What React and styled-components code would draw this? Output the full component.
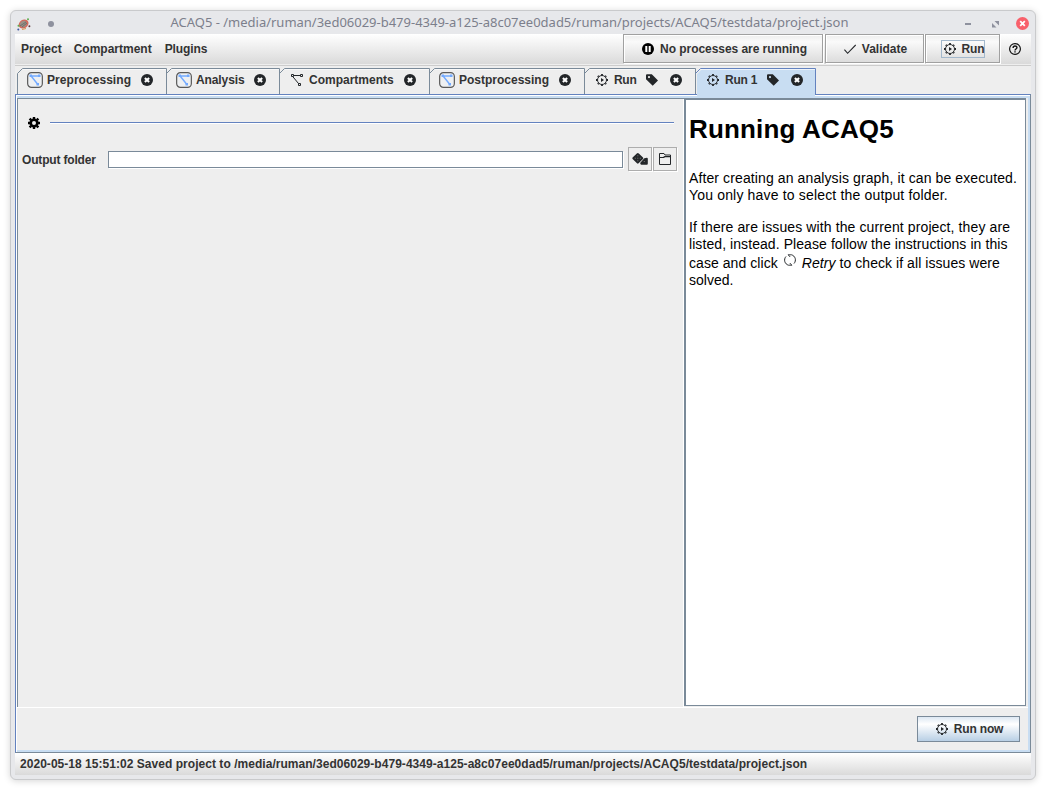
import React from "react";
import styled, { createGlobalStyle, css } from "styled-components";

const Global = createGlobalStyle`
  * { box-sizing: border-box; }
  html, body { margin: 0; padding: 0; background: #fff; }
  body { width: 1046px; height: 790px; overflow: hidden; font: bold 12px/14px "Liberation Sans", Arial, sans-serif; color: #333; }
  svg { display: block; flex: none; }
`;

const Desktop = styled.div`
  width: 1046px;
  height: 790px;
  padding: 10px;
`;
const Frame = styled.div`
  width: 1026px;
  height: 770px;
  padding: 0 4px;
  display: flex;
  flex-direction: column;
  background: #e7e8eb;
  border: 1px solid #c9cacc;
  border-radius: 6px;
  box-shadow: 0 1px 7px rgba(0, 0, 0, 0.17);
`;
const TitleBar = styled.header`
  display: flex;
  align-items: center;
  height: 23px;
  flex: none;
  padding: 2px 2px 0 2px;
`;
const Dot = styled.i`
  width: 6px;
  height: 6px;
  margin: 0 0 0 16.5px;
  border-radius: 50%;
  background: #8e919e;
`;
const Title = styled.div`
  margin: 0 0 3px 117px;
  font: 400 13px/18px "Noto Sans", sans-serif;
  letter-spacing: -0.01px;
  color: #7c7f8c;
  white-space: nowrap;
`;
const WindowControls = styled.div`
  display: flex;
  align-items: center;
  gap: 17px;
  margin-left: auto;

  & > :first-child { margin-right: 4px; }
`;
const MenuBar = styled.nav`
  display: flex;
  height: 32px;
  flex: none;
  border-bottom: 1px solid #ccc;
  background: linear-gradient(#fff 0, #dadada 30px, #eee 30px);
`;
const Menu = styled.span`
  padding: 8px 0 0 6px;
  margin-right: 6px;
  letter-spacing: ${(p) => p.$ls || 0}px;
  white-space: nowrap;

  &:nth-child(3) { margin-left: 1px; }
`;
const Tools = styled.div`
  display: flex;
  gap: 1px;
  margin-left: auto;
  height: 30px;
`;
const ToolButton = styled.button`
  display: flex;
  align-items: center;
  justify-content: center;
  gap: 6px;
  width: ${(p) => p.$w}px;
  height: 29px;
  margin-right: ${(p) => p.$mr || 0}px;
  padding: 0 0 0 ${(p) => p.$pl || 0}px;
  border: 1px solid #a0a0a0;
  box-shadow: 1px 1px 0 #fff, inset 1px 1px 0 #fff;
  background: linear-gradient(#ededed, #fafafa 25%, #dcdcdc);
  font: inherit;
  color: inherit;
  letter-spacing: ${(p) => p.$ls || 0}px;
  white-space: nowrap;
`;
const Focus = styled.span`
  display: flex;
  align-items: center;
  gap: 6px;
  height: 18px;
  padding: 0 0 0 2px;
  border: 1px solid #a3b8cc;
`;
const Help = styled.div`
  width: 30px;
  padding: 9px 0 0 8px;
`;
const Tabs = styled.div`
  display: flex;
  height: 29px;
  flex: none;
  padding: 2px 0 0 2px;
  background: #eee;
`;
const TabBox = styled.div`
  position: relative;
  isolation: isolate;
  display: flex;
  align-items: center;
  width: ${(p) => p.$w}px;
  height: 26px;
  padding: 0 0 2px 10px;
  margin-bottom: 1px;
  ${(p) => p.$active && css`
    height: 28px;
    padding-bottom: 4px;
    z-index: 1;
  `}
`;
const TabShape = styled.svg`
  position: absolute;
  left: 0;
  top: 0;
  z-index: -1;
  overflow: visible;
`;
const TabLabel = styled.span`
  margin-left: 4px;
  width: ${(p) => p.$w}px;
  letter-spacing: ${(p) => p.$ls || 0}px;
  white-space: nowrap;
`;
const TabTag = styled.span`
  margin-left: 10px;
`;
const TabClose = styled.span`
  margin-left: ${(p) => p.$gap}px;
`;
const Panel = styled.main`
  display: flex;
  flex-direction: column;
  height: 659px;
  flex: none;
  margin-top: -1px;
  border: 1px solid #6382bf;
  border-right-color: #7a8a99;
  border-bottom-color: #7a8a99;
  background: #eee;
  box-shadow: inset 1px 1px 0 #fff, inset 0 3px 0 #c8ddf2, inset -2px -2px 0 #c8ddf2, inset 1px 0 0 #c8ddf2;
  padding: 3px 2px 2px 1px;
`;
const Split = styled.div`
  display: flex;
  height: 610px;
  border-bottom: 1px solid #fff;
`;
const Form = styled.section`
  width: 667px;
  height: 609px;
  border: solid #7a8a99;
  border-width: 1px 0 0 1px;
  box-shadow: inset -1px 0 0 #fff;
  padding: 16px 6px 0 4px;
`;
const Heading = styled.div`
  display: flex;
  align-items: center;
  height: 16px;
  padding-left: 6px;
  gap: 10px;
`;
const Rule = styled.div`
  flex: 1;
  height: 2px;
  margin-right: 4px;
  border-top: 1px solid #6382bf;
  background: #fff;
`;
const Row = styled.div`
  display: flex;
  align-items: center;
  margin-top: 16px;
  height: 25px;
`;
const FieldLabel = styled.label`
  width: 86px;
  letter-spacing: -0.17px;
`;
const Field = styled.input`
  width: 515px;
  height: 17px;
  margin-right: 5px;
  padding: 0;
  border: 1px solid #7a8a99;
  background: #fff;
  box-shadow: 1px 1px 0 #fff;
`;
const IconButton = styled.button`
  display: flex;
  align-items: center;
  justify-content: center;
  width: 24px;
  height: 24px;
  margin: -1px 1px 0 0;
  padding: 0;
  border: 1px solid #adadad;
  background: #eee;
  box-shadow: 1px 1px 0 #fff;
`;
const Doc = styled.article`
  width: 342px;
  height: 608px;
  border: solid #7a8a99;
  border-width: 2px 1px 1px 2px;
  background: #fff;
  padding: 12px 0 0 3px;
  font: 400 14px/17px "Liberation Sans", Arial, sans-serif;
  color: #000;
`;
const DocTitle = styled.h1`
  margin: 0 0 24px;
  font: bold 26px/34px "Liberation Sans", Arial, sans-serif;
  letter-spacing: 0.17px;
`;
const Line = styled.div`
  display: flex;
  height: ${(p) => p.$h || 17}px;
  align-items: flex-end;
  letter-spacing: ${(p) => p.$ls || 0}px;
  white-space: pre;
`;
const Paragraph = styled.div`
  margin-bottom: 15px;
`;
const RetryIcon = styled.span`
  margin: 0 6px 6px;
`;
const Footer = styled.footer`
  display: flex;
  justify-content: flex-end;
  padding: 8px 8px 0 0;
`;
const Primary = styled.button`
  display: flex;
  align-items: center;
  justify-content: center;
  gap: 6px;
  width: 103px;
  height: 26px;
  padding: 0 0 0 2px;
  border: 1px solid #7a8a99;
  background: linear-gradient(#dde8f3 0, #fff 30%, #b8cfe5);
  font: inherit;
  letter-spacing: -0.15px;
  color: inherit;
`;
const Status = styled.div`
  height: 22px;
  flex: none;
  padding: 4px 5px;
  background: linear-gradient(#fff, #dadada);
  letter-spacing: 0.037px;
  white-space: nowrap;
`;

const AppIcon = () => (
  <svg width="14" height="14" viewBox="0 0 14 14">
    <ellipse cx="6.6" cy="7" rx="5.2" ry="4.2" fill="#d2695c" transform="rotate(-35 6.6 7)" />
    <ellipse cx="6.4" cy="7" rx="3.4" ry="2.9" fill="#9a9188" transform="rotate(-35 6.4 7)" />
    <path d="M3 9l6-4M5 10l5-4" stroke="#6d706b" strokeWidth="1" />
    <circle cx="11" cy="2.3" r="1" fill="#5cae4d" />
    <circle cx="1.5" cy="8.7" r="1" fill="#5cae4d" />
    <circle cx="1.3" cy="12.4" r="1" fill="#4257a5" />
    <circle cx="12.4" cy="9.2" r="1" fill="#61363a" />
    <path d="M5 12.5l4-1" stroke="#d99a52" />
  </svg>
);
const Graph = () => (
  <svg width="16" height="16" viewBox="0 0 16 16">
    <rect x=".65" y=".65" width="14.7" height="14.7" rx="3.8" fill="#eef0f2" stroke="#5a5a5a" strokeWidth="1.2" />
    <path d="M4 4h8M4.5 4.5l6 7.5" fill="none" stroke="#73aaff" strokeWidth="1.4" />
    <path d="M2.5 2.5H5V5H2.5zM11 2.5h2.5V5H11zM9.5 11H12v2.5H9.5z" fill="#73aaff" />
  </svg>
);
const Nodes = () => (
  <svg width="16" height="16" viewBox="0 0 16 16" fill="none" stroke="#232629">
    <path d="M4 3.5h8M3.7 4.5l6.2 7.5" />
    <path d="M2.5 2.5h2v2h-2zM11.5 2.5h2v2h-2zM9.5 11.5h2v2h-2z" fill="#eee" />
  </svg>
);
const Close = () => (
  <svg width="12" height="12" viewBox="0 0 12 12">
    <circle cx="6" cy="6" r="6" fill="#232629" />
    <path d="M3.9 3.9l4.2 4.2M8.1 3.9L3.900 8.100" stroke="#fff" strokeWidth="2.1" />
  </svg>
);
const RunGear = () => (
  <svg width="12" height="12" viewBox="0 0 12 12">
    <circle cx="6" cy="6" r="4.5" fill="none" stroke="#232629" strokeWidth="1" />
    <g stroke="#232629" strokeWidth="1.8">
      <path d="M6 0v1.500M6 10.500V12M0 6h1.500M10.500 6H12" />
      <path d="M1.800 1.800l.9.9M9.300 9.300l.9.9M10.200 1.800l-.9.9M2.700 9.300l-.9.9" />
    </g>
    <path d="M5 4L8 6 5 8z" fill="#232629" />
  </svg>
);
const Tag = () => (
  <svg width="12" height="12" viewBox="0 0 12 12">
    <path fillRule="evenodd" d="M0 1.200Q0 .3 1 .3h4.800L12 6.400 6.700 11.700 0 5.300zM3 2a1.100 1.100 0 1 0 0 2.200A1.100 1.100 0 0 0 3 2z" fill="#232629" />
  </svg>
);
const Pause = () => (
  <svg width="12" height="12" viewBox="0 0 12 12">
    <circle cx="6" cy="6" r="6" fill="#000" />
    <path d="M3.300 3h2v6h-2zM6.700 3h2v6h-2z" fill="#fff" />
  </svg>
);
const Check = () => (
  <svg width="12" height="12" viewBox="0 0 12 12">
    <path d="M.4 6.700l3.200 3.600L11.700 2" fill="none" stroke="#232629" strokeWidth="1.1" />
  </svg>
);
const Question = () => (
  <svg width="12" height="12" viewBox="0 0 12 12" fill="none" stroke="#111">
    <circle cx="6" cy="6" r="5.400" strokeWidth="1.200" />
    <path d="M4.100 4.900C4.100 2.200 8 2.400 7.900 4.700 7.800 6 6 6 6 7.400" strokeWidth="1.400" />
    <path d="M6 8.300v1.300" strokeWidth="1.400" />
  </svg>
);
const Gear = () => (
  <svg width="12" height="12" viewBox="0 0 12 12">
    <circle cx="6" cy="6" r="3.300" fill="none" stroke="#000" strokeWidth="2.600" />
    <path d="M6 0v2M6 10v2M0 6h2M10 6h2M1.600 1.600l1.600 1.600M8.800 8.800l1.600 1.600M10.400 1.600L8.800 3.200M3.200 8.800l-1.600 1.600" stroke="#000" strokeWidth="2.400" />
  </svg>
);
const Dice = () => (
  <svg width="16" height="12" viewBox="0 0 16 12">
    <path d="M8.300 11V9.700L12.300 5.300l2.500-.5q1 0 1 1v5q0 1-1 1H9.300z" fill="#232629" />
    <path d="M5.800 0q.6 0 1 .4L11 4.600q.7.7 0 1.400L6.600 10.300q-.8.8-1.600 0L.6 6Q0 5.300.6 4.600L4.800.4Q5.200 0 5.800 0z" fill="#232629" />
    <path d="M5.300 2.300h1v1h-1zM2.800 4.800h1v1h-1zM5.300 4.800h1v1h-1zM7.800 4.800h1v1h-1zM5.300 7.300h1v1h-1zM11.800 8h1v1h-1z" fill="#777" />
  </svg>
);
const Folder = () => (
  <svg width="12" height="12" viewBox="0 0 12 12">
    <path d="M.5 11.500V.5h4.500l1 1.500h5.500v9.500z" fill="none" stroke="#232629" />
    <path d="M0 4h4L5.500 3H12v1.300H6L5 5H0z" fill="#232629" />
  </svg>
);
const Retry = () => (
  <svg width="12" height="12" viewBox="0 0 12 12" fill="none" stroke="#232629" strokeWidth="1">
    <path d="M4.500 11.200A5.300 5.300 0 0 1 2 2.500M7.500.8a5.300 5.300 0 0 1 2.500 8.700" />
    <path d="M4 .8h3.500M4.200.8l2 2.200M8 11.200H4.500M7.800 11.200l-2-2.200" strokeWidth=".9" />
  </svg>
);
const Minimise = () => (
  <svg width="6" height="12" viewBox="0 0 6 12"><path d="M0 6h6" stroke="#8e919e" strokeWidth="2" /></svg>
);
const Maximise = () => (
  <svg width="7" height="12" viewBox="0 0 7 12"><path d="M2.500 3H7v4.500zM0 5v4.500h4.500z" fill="#8e919e" /></svg>
);
const CloseWindow = () => (
  <svg width="13" height="13" viewBox="0 0 13 13">
    <circle cx="6.500" cy="6.500" r="6.500" fill="#f8606b" />
    <path d="M4.200 4.200l4.600 4.600M8.800 4.200L4.200 8.800" stroke="#fff" strokeWidth="1.800" />
  </svg>
);

const tabs = [
  { label: "Preprocessing", w: 149, lw: 84, icon: "graph", gap: 10, ls: 0.05 },
  { label: "Analysis", w: 113, lw: 48, icon: "graph", gap: 10, ls: -0.1 },
  { label: "Compartments", w: 150, lw: 85, icon: "nodes", gap: 10 },
  { label: "Postprocessing", w: 155, lw: 90, icon: "graph", gap: 10 },
  { label: "Run", w: 111, lw: 22, icon: "run", tag: true, gap: 12, ls: -0.3 },
  { label: "Run 1", w: 120, lw: 32, icon: "run", tag: true, gap: 12, ls: -0.2, active: true },
];

const RunSlot = styled.span`
  padding: 0 2px;
`;

function Tab({ tab }) {
  const stroke = tab.active ? "#6382bf" : "#7a8a99";
  const right = tab.w + 0.5;
  return (
    <TabBox $w={tab.w} $active={tab.active}>
      <TabShape width={tab.w} height={tab.active ? 28 : 26}>
        {tab.active ? (
          <>
            <path d={`M2 29V6L7 1H${tab.w}V29z`} fill="#c8ddf2" />
            <path d={`M.5 5.500L5.500.5H${right}V27`} fill="none" stroke={stroke} />
          </>
        ) : (
          <path d={`M.5 26V5.500L5.500.5H${right}V26`} fill="none" stroke={stroke} />
        )}
        <path d={`M6 1.500H${tab.w}`} stroke="#fff" opacity=".7" />
      </TabShape>
      {tab.icon === "graph" && <Graph />}
      {tab.icon === "nodes" && <Nodes />}
      {tab.icon === "run" && <RunSlot><RunGear /></RunSlot>}
      <TabLabel $w={tab.lw} $ls={tab.ls}>{tab.label}</TabLabel>
      {tab.tag && <TabTag><Tag /></TabTag>}
      <TabClose $gap={tab.gap}><Close /></TabClose>
    </TabBox>
  );
}

export default function App() {
  return (
    <Desktop>
      <Global />
      <Frame>
        <TitleBar>
          <AppIcon />
          <Dot />
          <Title>ACAQ5 - /media/ruman/3ed06029-b479-4349-a125-a8c07ee0dad5/ruman/projects/ACAQ5/testdata/project.json</Title>
          <WindowControls><Minimise /><Maximise /><CloseWindow /></WindowControls>
        </TitleBar>
        <MenuBar>
          <Menu>Project</Menu>
          <Menu>Compartment</Menu>
          <Menu $ls={-0.1}>Plugins</Menu>
          <Tools>
            <ToolButton $w={200} $mr={1} $pl={3} $ls={-0.05}><Pause />No processes are running</ToolButton>
            <ToolButton $w={99} $pl={2}><Check />Validate</ToolButton>
            <ToolButton $w={75} $pl={1} $ls={-0.15}><Focus><RunGear />Run</Focus></ToolButton>
            <Help><Question /></Help>
          </Tools>
        </MenuBar>
        <Tabs>{tabs.map((tab) => <Tab key={tab.label} tab={tab} />)}</Tabs>
        <Panel>
          <Split>
            <Form>
              <Heading><Gear /><Rule /></Heading>
              <Row>
                <FieldLabel>Output folder</FieldLabel>
                <Field />
                <IconButton><Dice /></IconButton>
                <IconButton><Folder /></IconButton>
              </Row>
            </Form>
            <Doc>
              <DocTitle>Running ACAQ5</DocTitle>
              <Paragraph>
                <Line $ls={0.11}>After creating an analysis graph, it can be executed.</Line>
                <Line $ls={0.17}>You only have to select the output folder.</Line>
              </Paragraph>
              <Paragraph>
                <Line $ls={0.11}>If there are issues with the current project, they are</Line>
                <Line $ls={0.075}>listed, instead. Please follow the instructions in this</Line>
                <Line $h={19} $ls={0.06}>case and click<RetryIcon><Retry /></RetryIcon><em>Retry</em> to check if all issues were</Line>
                <Line>solved.</Line>
              </Paragraph>
            </Doc>
          </Split>
          <Footer><Primary><RunGear />Run now</Primary></Footer>
        </Panel>
        <Status>2020-05-18 15:51:02 Saved project to /media/ruman/3ed06029-b479-4349-a125-a8c07ee0dad5/ruman/projects/ACAQ5/testdata/project.json</Status>
      </Frame>
    </Desktop>
  );
}
